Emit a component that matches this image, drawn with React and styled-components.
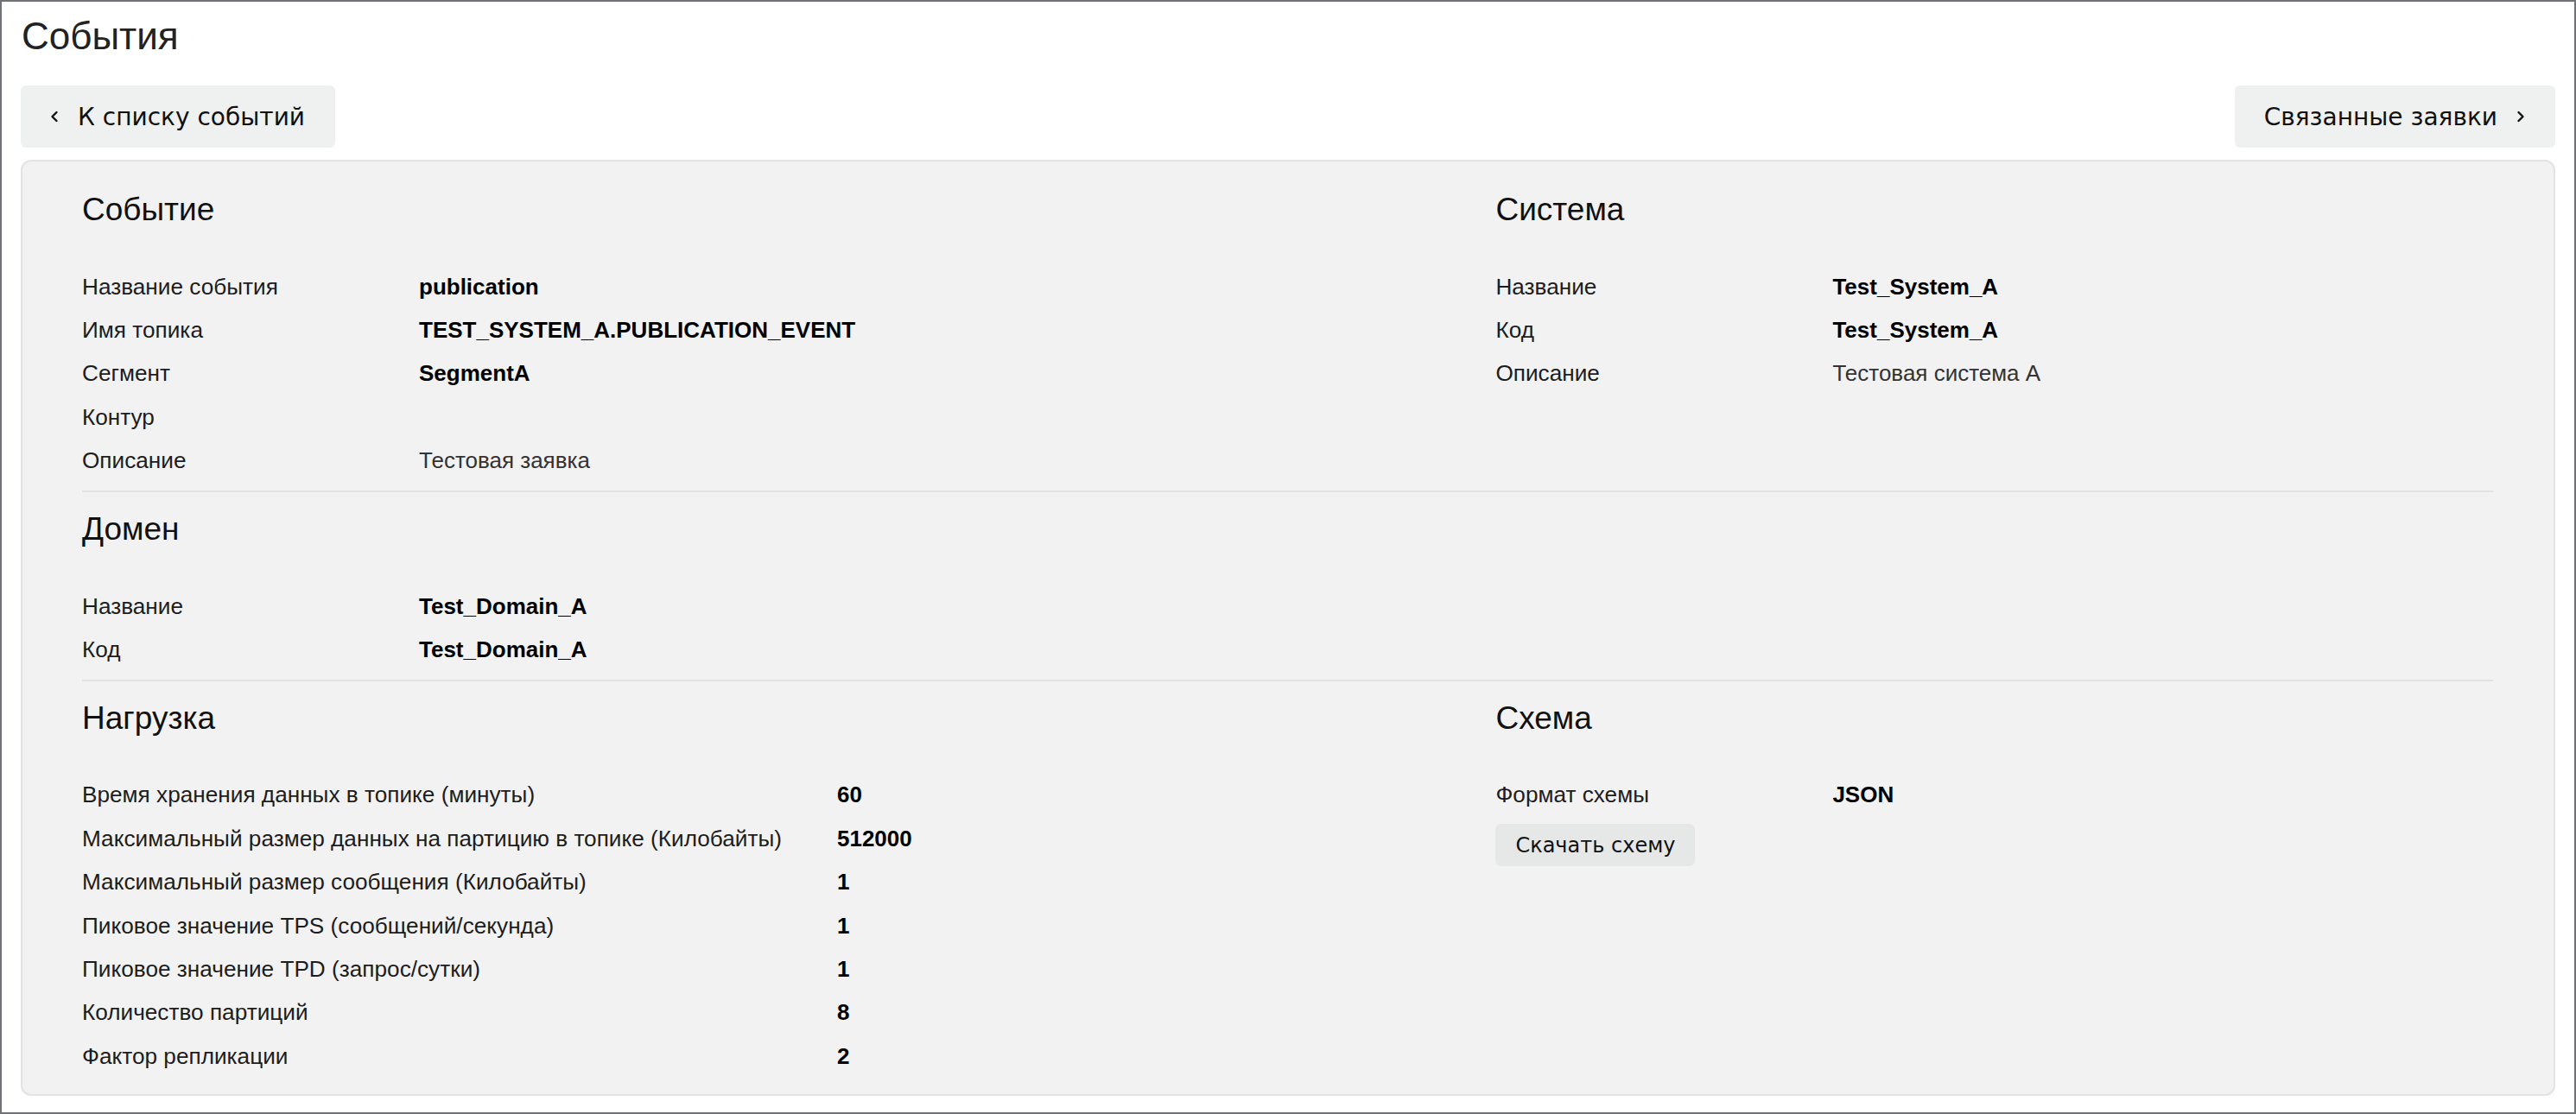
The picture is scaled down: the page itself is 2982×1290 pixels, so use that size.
import React from 'react';
import styled, { createGlobalStyle } from 'styled-components';

const GlobalStyle = createGlobalStyle`
    html, body {
        margin: 0;
        padding: 0;
        background: #ffffff;
    }
    body {
        font-family: 'Liberation Sans', Arial, sans-serif;
        color: #1d1d1d;
    }
    * {
        box-sizing: border-box;
    }
`;

const PageFrame = styled.div`
    width: 2982px;
    height: 1290px;
    border: 2px solid #6f7277;
    padding: 15px 22px 0 22px;
    background: #ffffff;
`;

const PageTitle = styled.h1`
    margin: 0 0 0 1px;
    font-size: 44px;
    line-height: 50px;
    font-weight: 400;
    color: #222222;
`;

const Toolbar = styled.div`
    display: flex;
    justify-content: space-between;
    align-items: center;
    margin-top: 32px;
`;

const NavButton = styled.button`
    display: inline-flex;
    align-items: center;
    gap: 22px;
    height: 72px;
    padding: 0 35px 0 34px;
    border: none;
    border-radius: 6px;
    background: #eff0f0;
    font-family: 'DejaVu Sans', Verdana, sans-serif;
    font-size: 28px;
    color: #111111;
    cursor: pointer;
`;

const Card = styled.div`
    margin-top: 14px;
    border: 2px solid #e3e3e3;
    border-radius: 12px;
    background: #f2f2f2;
    padding: 31px 70px 9px 69px;
`;

const SectionRow = styled.div`
    display: grid;
    grid-template-columns: 7fr 5fr;
    column-gap: 20px;
    padding-bottom: ${(props) => (props.$last ? '10px' : '9px')};
    margin-top: ${(props) => (props.$first ? '0' : '18px')};
`;

const Divider = styled.hr`
    margin: 0;
    border: none;
    height: 2px;
    background: #e2e2e2;
`;

const SectionBlock = styled.section``;

const SectionHeading = styled.h2`
    margin: 0 0 39px 0;
    font-size: 37px;
    line-height: 50px;
    font-weight: 400;
    color: #111111;
`;

const FieldList = styled.div`
    display: grid;
    grid-template-columns: minmax(390px, max-content) 1fr;
    grid-auto-rows: 50.4px;
`;

const FieldLabel = styled.div`
    display: flex;
    align-items: center;
    padding-right: 64px;
    font-size: 26.2px;
    color: #1d1d1d;
    white-space: nowrap;
`;

const FieldValue = styled.div`
    display: flex;
    align-items: center;
    font-size: 26px;
    font-weight: ${(props) => (props.$plain ? 400 : 700)};
    color: ${(props) => (props.$plain ? '#333333' : '#000000')};
    white-space: nowrap;
`;

const SmallButton = styled.button`
    margin-top: 8px;
    height: 49px;
    padding: 0 23px;
    border: none;
    border-radius: 6px;
    background: #e6e8e8;
    font-family: 'DejaVu Sans', Verdana, sans-serif;
    font-size: 24px;
    color: #111111;
    cursor: pointer;
`;

const Chevron = ({ dir }) => (
    <svg width="10" height="16" viewBox="0 0 10 16" fill="none">
        <polyline
            points={dir === 'left' ? '7.5,3 2.5,8 7.5,13' : '2.5,3 7.5,8 2.5,13'}
            stroke="#111111"
            strokeWidth="2.4"
            strokeLinecap="round"
            strokeLinejoin="round"
        />
    </svg>
);

const Section = ({ title, fields, children }) => (
    <SectionBlock>
        <SectionHeading>{title}</SectionHeading>
        <FieldList>
            {fields.map((field) => (
                <React.Fragment key={field.label}>
                    <FieldLabel>{field.label}</FieldLabel>
                    <FieldValue $plain={field.plain}>{field.value}</FieldValue>
                </React.Fragment>
            ))}
        </FieldList>
        {children}
    </SectionBlock>
);

const eventFields = [
    { label: 'Название события', value: 'publication' },
    { label: 'Имя топика', value: 'TEST_SYSTEM_A.PUBLICATION_EVENT' },
    { label: 'Сегмент', value: 'SegmentA' },
    { label: 'Контур', value: '' },
    { label: 'Описание', value: 'Тестовая заявка', plain: true },
];

const systemFields = [
    { label: 'Название', value: 'Test_System_A' },
    { label: 'Код', value: 'Test_System_A' },
    { label: 'Описание', value: 'Тестовая система А', plain: true },
];

const domainFields = [
    { label: 'Название', value: 'Test_Domain_A' },
    { label: 'Код', value: 'Test_Domain_A' },
];

const loadFields = [
    { label: 'Время хранения данных в топике (минуты)', value: '60' },
    { label: 'Максимальный размер данных на партицию в топике (Килобайты)', value: '512000' },
    { label: 'Максимальный размер сообщения (Килобайты)', value: '1' },
    { label: 'Пиковое значение TPS (сообщений/секунда)', value: '1' },
    { label: 'Пиковое значение TPD (запрос/сутки)', value: '1' },
    { label: 'Количество партиций', value: '8' },
    { label: 'Фактор репликации', value: '2' },
];

const schemaFields = [{ label: 'Формат схемы', value: 'JSON' }];

export default function App() {
    return (
        <>
            <GlobalStyle />
            <PageFrame>
                <PageTitle>События</PageTitle>
                <Toolbar>
                    <NavButton type="button">
                        <Chevron dir="left" />
                        К списку событий
                    </NavButton>
                    <NavButton type="button">
                        Связанные заявки
                        <Chevron dir="right" />
                    </NavButton>
                </Toolbar>
                <Card>
                    <SectionRow $first>
                        <Section title="Событие" fields={eventFields} />
                        <Section title="Система" fields={systemFields} />
                    </SectionRow>
                    <Divider />
                    <SectionRow>
                        <Section title="Домен" fields={domainFields} />
                    </SectionRow>
                    <Divider />
                    <SectionRow $last>
                        <Section title="Нагрузка" fields={loadFields} />
                        <Section title="Схема" fields={schemaFields}>
                            <SmallButton type="button">Скачать схему</SmallButton>
                        </Section>
                    </SectionRow>
                </Card>
            </PageFrame>
        </>
    );
}
